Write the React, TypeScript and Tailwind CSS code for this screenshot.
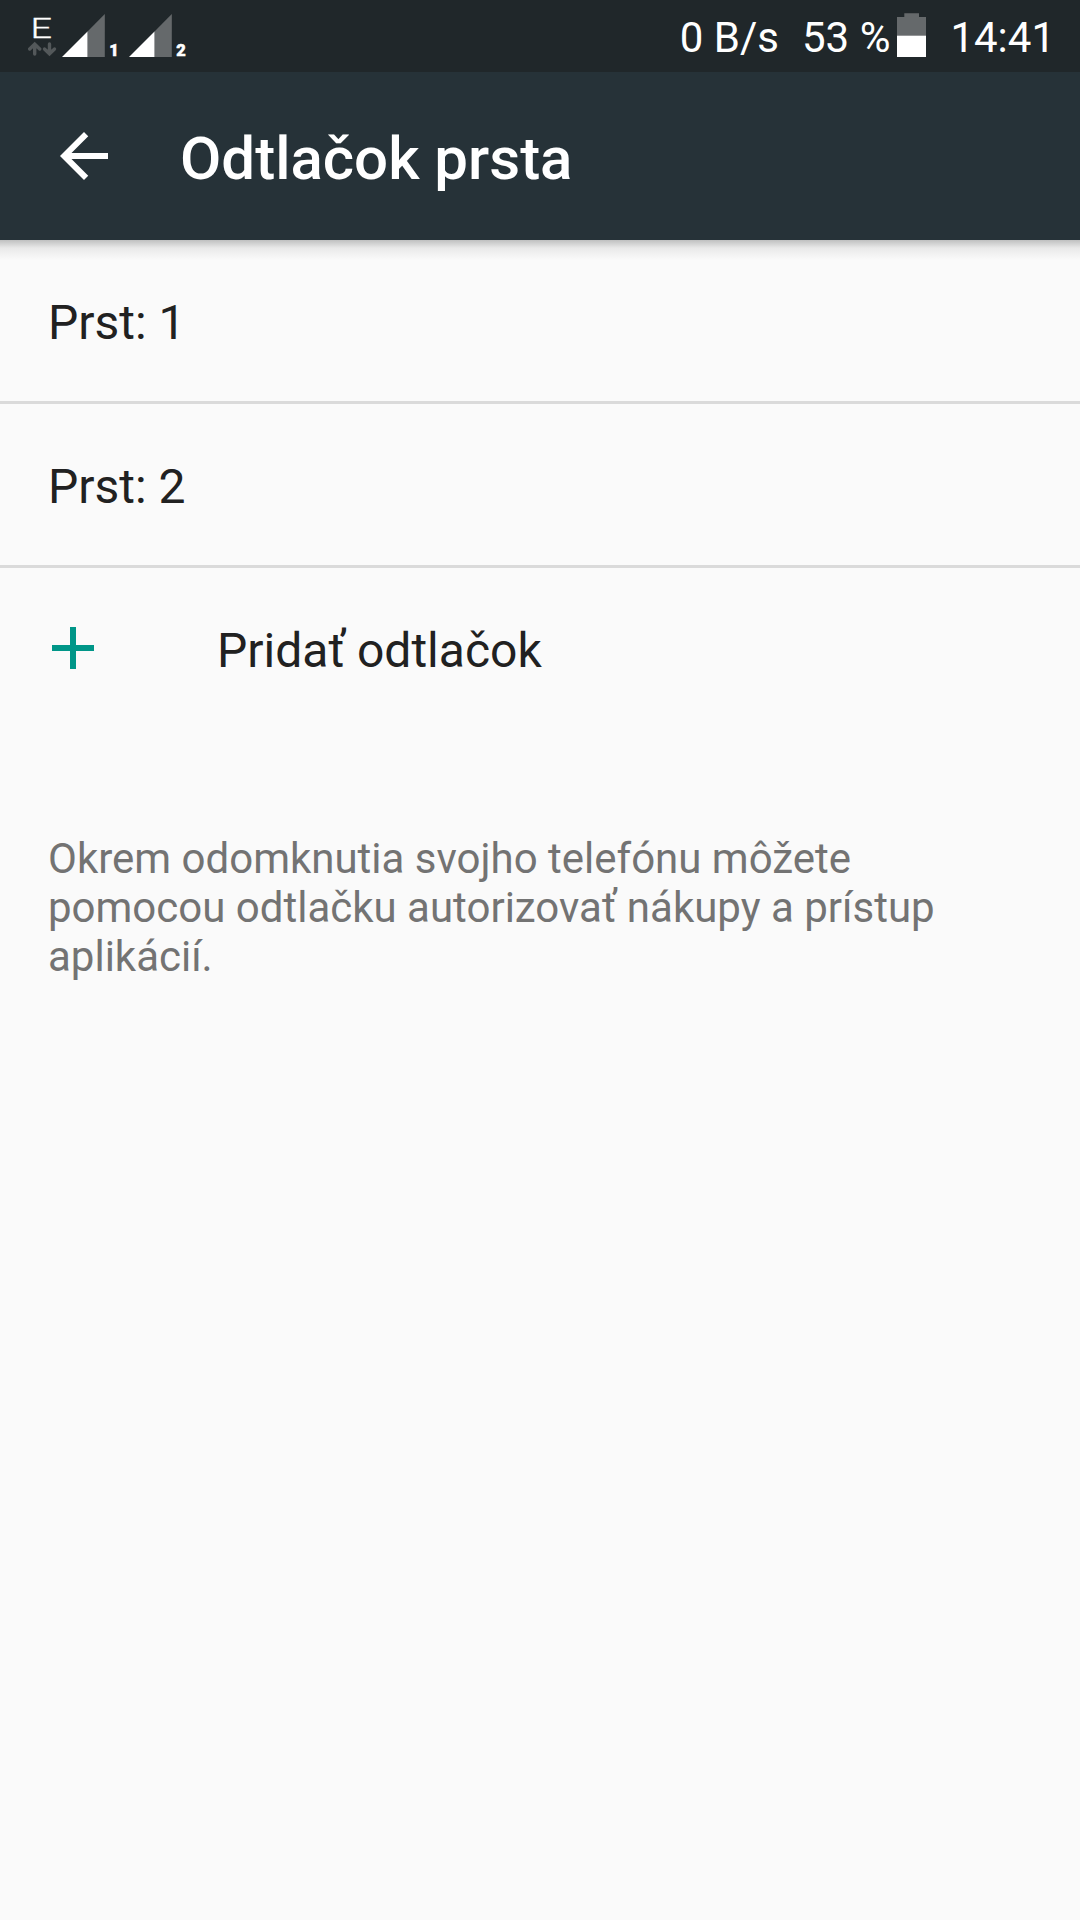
interface SignalProps {
  sim: string;
}

const SignalIcon = ({ sim }: SignalProps) => {
  return (
    <svg width="60" height="72" viewBox="0 0 60 72">
      <path d="M25.5 31.5 L42.8 14 V57 H25.5 Z" fill="#65696b" />
      <path d="M0 57 L25.5 31.5 V57 Z" fill="#fff" />
      <text x="47.2" y="56" fill="#fff" stroke="#fff" strokeWidth="0.5" fontSize="16" fontWeight="900" textLength="9.5" lengthAdjust="spacingAndGlyphs">
        {sim}
      </text>
    </svg>
  );
};

const DataIcon = () => {
  return (
    <svg width="30" height="72" viewBox="0 0 30 72">
      <text x="2.6" y="38" fill="#fff" stroke="#fff" strokeWidth="0.3" fontSize="28" fontWeight="300" textLength="21.5" lengthAdjust="spacingAndGlyphs">
        E
      </text>
      <g stroke="#53585a" strokeWidth="3.4" strokeLinecap="round" fill="none">
        <path d="M6.7 54 V46 M1.7 49 L6.7 44.2 L11.7 49" />
        <path d="M21.5 44 V52 M16.5 49 L21.5 53.8 L26.5 49" />
      </g>
    </svg>
  );
};

const BatteryIcon = () => {
  return (
    <svg width="29" height="72" viewBox="0 0 29 72">
      <path d="M7.3 13.3 H22 V17 H29 V36 H0 V17 H7.3 Z" fill="#65696b" />
      <path d="M0 35.7 H29 V57 H0 Z" fill="#fff" />
    </svg>
  );
};

const StatusBar = () => {
  return (
    <div className="flex h-[72px] justify-between bg-[#20272a] pl-7 pr-[25px] text-[42px] leading-[75px] text-white">
      <div className="flex">
        <DataIcon />
        <div className="ml-1 flex gap-[7px]">
          <SignalIcon sim="1" />
          <SignalIcon sim="2" />
        </div>
      </div>
      <div className="flex whitespace-nowrap">
        <span className="mr-[23px]">0 B/s</span>
        <span className="mr-[7px]">53 %</span>
        <BatteryIcon />
        <span className="ml-6">14:41</span>
      </div>
    </div>
  );
};

const Header = () => {
  return (
    <header className="flex h-[168px] items-center bg-[#263238] pl-12 text-white">
      <svg width="72" height="72" viewBox="0 0 24 24" fill="currentColor">
        <path d="M20 11H7.83l5.59-5.59L12 4l-8 8 8 8 1.41-1.41L7.83 13H20v-2z" />
      </svg>
      <h1 className="ml-[60px] pt-[5px] text-[60px] font-medium leading-[168px]">Odtlačok prsta</h1>
    </header>
  );
};

const fingerprints = ["Prst: 1", "Prst: 2"];

export default function App() {
  return (
    <div className="h-[1920px] w-[1080px] overflow-hidden bg-[#fafafa] font-['Roboto',sans-serif]">
      <StatusBar />
      <Header />
      <main>
        <div className="h-5 bg-linear-to-b from-[#bfc0c0] via-[#e9e9e9] via-40% to-[#fafafa]" />
        <ul className="-mt-5 text-5xl text-[#212121]">
          {fingerprints.map((name) => (
            <li key={name} className="h-[164px] border-b-[3px] border-[#dadada] pl-12 leading-[165px]">
              {name}
            </li>
          ))}
          <li className="flex h-[164px] pl-[37px] leading-[165px]">
            <svg className="mt-11" width="72" height="72" viewBox="0 0 24 24" fill="#009688">
              <path d="M19 13h-6v6h-2v-6H5v-2h6V5h2v6h6v2z" />
            </svg>
            <span className="ml-[108px]">Pridať odtlačok</span>
          </li>
        </ul>
        <p className="ml-12 mt-[102px] w-[930px] text-[42px] leading-[49px] text-[#737373]">
          Okrem odomknutia svojho telefónu môžete pomocou odtlačku autorizovať nákupy a prístup aplikácií.
        </p>
      </main>
    </div>
  );
}
